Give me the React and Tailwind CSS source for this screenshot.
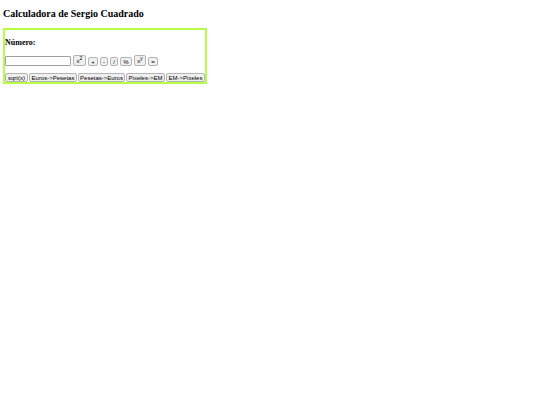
import { useState } from "react";

const operations = [
  { id: "square", label: <>x<sup className="text-[5px]">2</sup></>, size: "h-[11px] w-[13px]" },
  { id: "add", label: "+", size: "h-[9px] w-[10px]" },
  { id: "subtract", label: "-", size: "h-[9px] w-[8px]" },
  { id: "divide", label: "/", size: "h-[9px] w-[8px]" },
  { id: "modulo", label: "%", size: "h-[9px] w-[12px]" },
  { id: "power", label: <>x<sup className="text-[5px]">y</sup></>, size: "h-[11px] w-[12px]" },
  { id: "equals", label: "=", size: "h-[9px] w-[10px]" }
];

const conversions = [
  { id: "sqrt", label: "sqrt(x)", size: "h-[9px] w-[23px]" },
  { id: "toPesetas", label: "Euros->Pesetas", size: "h-[9px] w-[48px]" },
  { id: "toEuros", label: "Pesetas->Euros", size: "h-[9px] w-[47px]" },
  { id: "toEm", label: "Pixeles->EM", size: "h-[9px] w-[39px]" },
  { id: "toPixels", label: "EM->Pixeles", size: "h-[9px] w-[39px]" }
];

function CalcButton({ size, onClick, children }) {
  return (
    <button
      type="button"
      onClick={onClick}
      className={`${size} flex shrink-0 items-center justify-center whitespace-nowrap rounded-[2px] border border-[#b4b4b4] bg-[#efefef] font-['Liberation_Sans',Arial,sans-serif] text-[6px] leading-none text-black`}
    >
      <span>{children}</span>
    </button>
  );
}

export default function App() {
  const [value, setValue] = useState("");
  const [pending, setPending] = useState(null);

  const operate = (id) => {
    const number = Number(value);
    if (id === "square") {
      setValue(String(number * number));
    } else if (id !== "equals") {
      setPending({ id, number });
      setValue("");
    } else if (pending) {
      const results = {
        add: pending.number + number,
        subtract: pending.number - number,
        divide: pending.number / number,
        modulo: pending.number % number,
        power: pending.number ** number
      };
      setValue(String(results[pending.id]));
      setPending(null);
    }
  };

  const convert = (id) => {
    const number = Number(value);
    const results = {
      sqrt: Math.sqrt(number),
      toPesetas: number * 166.386,
      toEuros: number / 166.386,
      toEm: number / 16,
      toPixels: number * 16
    };
    setValue(String(results[id]));
  };

  return (
    <main className="bg-white px-[3px] pt-2 font-['Liberation_Serif','Times_New_Roman',serif] text-black">
      <h1 className="text-[10px] font-bold leading-3">Calculadora de Sergio Cuadrado</h1>
      <form className="mt-2 w-fit border-2 border-[#b7fc47]" onSubmit={(e) => e.preventDefault()}>
        <label htmlFor="numero" className="block pt-2 text-[8px] font-bold leading-[10px]">Número:</label>
        <div className="mt-[7px] flex items-end gap-[2px]">
          <input
            id="numero"
            type="text"
            value={value}
            onChange={(e) => setValue(e.target.value)}
            className="h-[10px] w-[66px] rounded-[1px] border border-[#a0a0a0] bg-white px-px font-['Liberation_Sans',Arial,sans-serif] text-[6px] leading-none"
          />
          {operations.map((op) => (
            <CalcButton key={op.id} size={op.size} onClick={() => operate(op.id)}>{op.label}</CalcButton>
          ))}
        </div>
        <div className="mt-[7px] flex gap-px">
          {conversions.map((c) => (
            <CalcButton key={c.id} size={c.size} onClick={() => convert(c.id)}>{c.label}</CalcButton>
          ))}
        </div>
      </form>
    </main>
  );
}
